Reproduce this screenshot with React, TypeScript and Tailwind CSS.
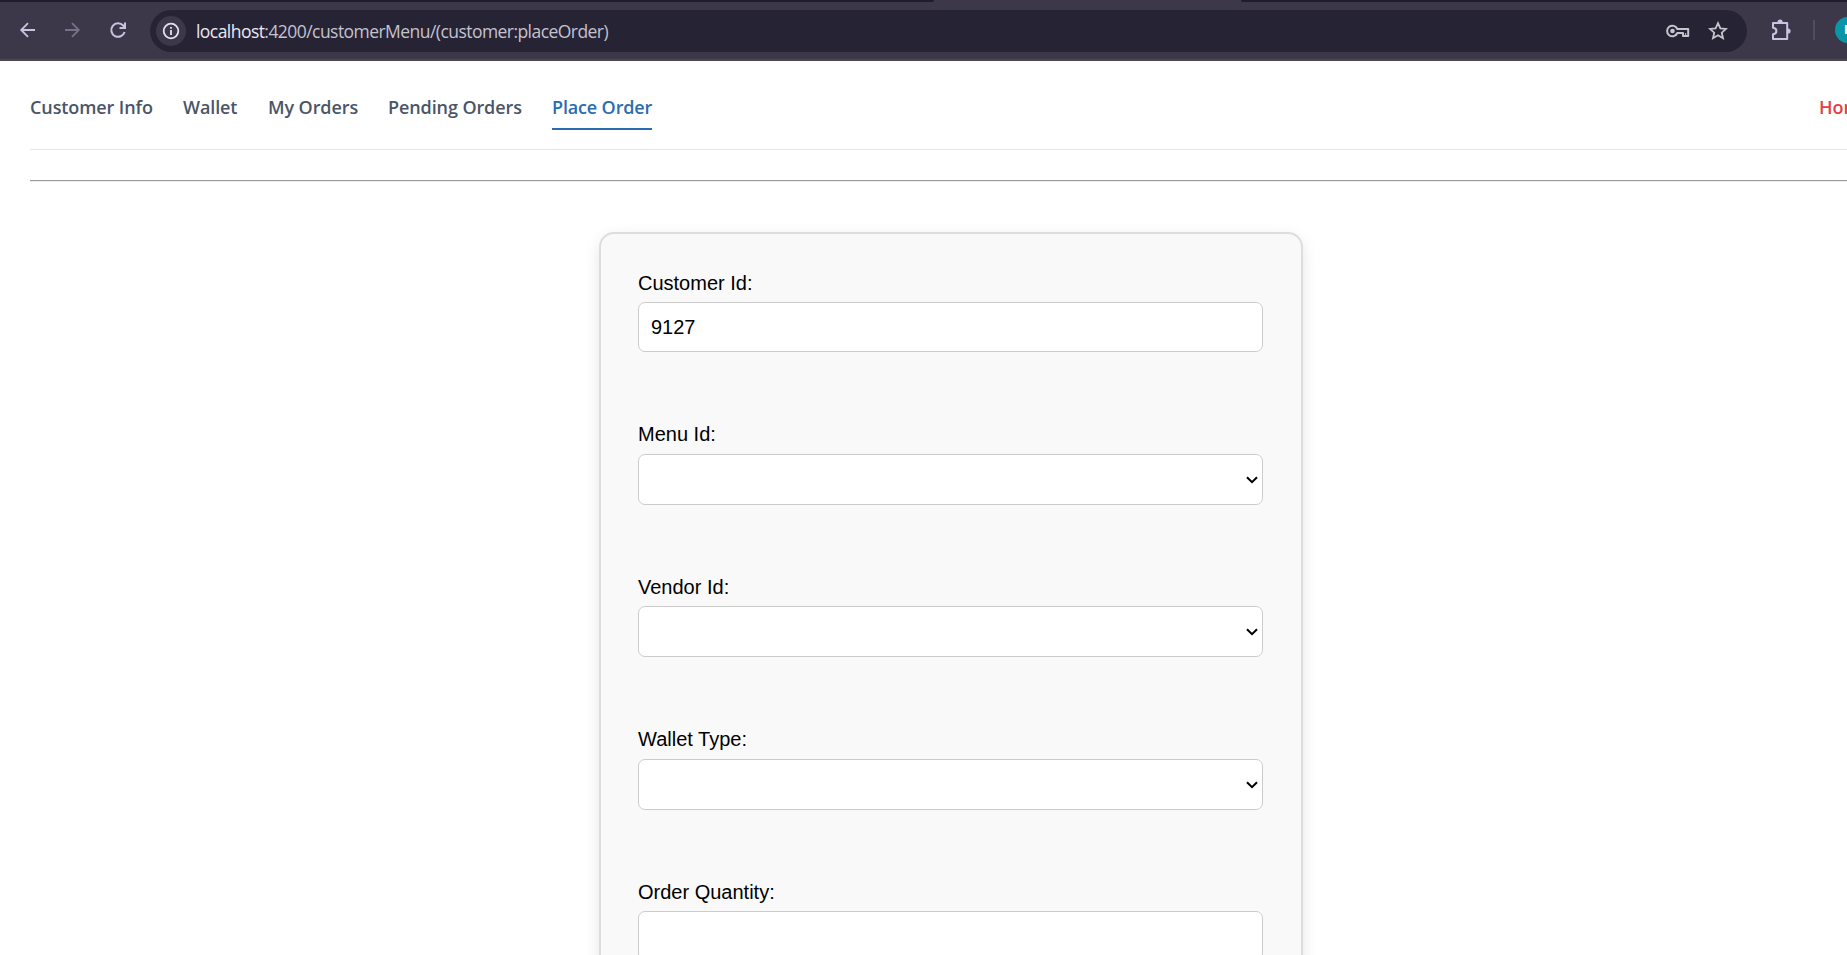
import type { ReactNode } from "react";

const NAV = [
  { label: "Customer Info", box: "w-[123px]" },
  { label: "Wallet", box: "w-[55px]" },
  { label: "My Orders", box: "w-[90px]" },
  { label: "Pending Orders", box: "w-[134px]" },
];

function Toolbar() {
  return (
    <header className="flex h-[61px] flex-col border-b-2 border-[#4a484b] bg-[#3c384a]">
      <div className="flex h-[2px] shrink-0 justify-between bg-[#3c384a]">
        <div className="w-[934px] rounded-br-[3px] bg-[#1f1c30]" />
        <div className="w-[606px] rounded-bl-[3px] bg-[#1f1c30]" />
      </div>
      <div className="flex h-[57px] shrink-0 items-center pb-px">
        <div className="flex w-[150px] shrink-0 items-center">
          <svg className="ml-[19px] h-[18px] w-[18px]" viewBox="0 0 18 18" fill="none" stroke="#c9c2e0" strokeWidth="1.8">
            <path d="M16 9H2.5M9 2.2L2.2 9L9 15.8" />
          </svg>
          <svg className="ml-[26px] h-[18px] w-[18px]" viewBox="0 0 18 18" fill="none" stroke="#767186" strokeWidth="1.8">
            <path d="M2 9h13.5M9 2.2L15.8 9L9 15.8" />
          </svg>
          <svg className="ml-[28px] h-[18px] w-[18px]" viewBox="0 0 18 18" fill="none" stroke="#c9c2e0" strokeWidth="2">
            <path d="M15.6 11A6.8 6.8 0 1 1 14.2 4.5L16 6.5M10.5 7H16V1.4" />
          </svg>
        </div>
        <div className="mt-[2px] flex h-[42px] w-[1597px] shrink-0 items-center rounded-full bg-[#262335]">
          <div className="ml-[6px] flex h-[30px] w-[30px] items-center justify-center rounded-full bg-[#3c384a]">
            <svg className="h-[18px] w-[18px]" viewBox="0 0 18 18" fill="none" stroke="#e4e0ee" strokeWidth="1.8">
              <circle cx="9" cy="9" r="7.3" />
              <path d="M9 8v5M9 5v1.8" />
            </svg>
          </div>
          <div className="ml-[10px] w-[420px] whitespace-nowrap font-['Open_Sans',sans-serif] text-[17.5px] leading-6 tracking-[-0.55px] text-[#c5c2ce]">
            <span className="text-[#ebe8f2]">localhost</span>:4200/customerMenu/(customer:placeOrder)
          </div>
          <svg className="ml-auto h-[14px] w-[24px]" viewBox="0 0 24 14" fill="none" stroke="#c7c5cb" strokeWidth="2">
            <path d="M11.3 5H22.2V12H17V9H11.3A5.3 5.3 0 1 1 11.3 5Z" strokeLinejoin="round" />
            <circle cx="6.5" cy="7" r="2.3" fill="#c7c5cb" stroke="none" />
            <path d="M19.6 9v3" strokeWidth="1" />
          </svg>
          <svg className="mr-[19px] ml-[18px] h-[20px] w-[20px]" viewBox="0 0 20 20" fill="none" stroke="#c7c5cb" strokeWidth="1.8">
            <path d="M10 2.2L12.4 7.3L18 7.9L13.8 11.7L15 17.2L10 14.3L5 17.2L6.2 11.7L2 7.9L7.6 7.3Z" />
          </svg>
        </div>
        <svg className="ml-[23px] h-[22px] w-[22px] shrink-0" viewBox="0 0 22 22" fill="none" stroke="#c9c2e0" strokeWidth="2">
          <path d="M3 4H17.2V20H3V15.2Q6.4 14.8 6.4 12Q6.4 9.2 3 8.8Z" strokeLinejoin="round" />
          <path d="M7.5 3.2A2.6 2.6 0 0 1 12.7 3.2ZM18 9.4A2.6 2.6 0 0 1 18 14.6Z" fill="#c9c2e0" stroke="none" />
        </svg>
        <div className="ml-[21px] h-[20px] w-[2px] shrink-0 bg-[#514d60]" />
        <div className="ml-[20px] flex h-[26px] w-[26px] shrink-0 items-center justify-center rounded-full bg-[#0797a7] font-['Open_Sans',sans-serif] text-[12px] font-bold text-white">
          R
        </div>
      </div>
    </header>
  );
}

function Nav() {
  return (
    <nav className="flex h-[89px] shrink-0 items-start border-b border-[#e2e8f0] pt-[34px] font-['Open_Sans',sans-serif] text-[18px] leading-[24px] font-semibold whitespace-nowrap text-[#4a5568]">
      {NAV.map((item) => (
        <a key={item.label} className={`mr-[30px] tracking-[-0.1px] ${item.box}`}>
          {item.label}
        </a>
      ))}
      <a className="h-[35px] w-[100px] border-b-2 border-[#2b6cb0] tracking-[-0.15px] text-[#2b6cb0]">Place Order</a>
      <a className="ml-auto w-[28px] text-[#e53e3e]">Home</a>
    </nav>
  );
}

function Field({ label, className, children }: { label: string; className: string; children: ReactNode }) {
  return (
    <label className={`flex flex-col ${className}`}>
      <span className="leading-[24px]">{label}</span>
      {children}
    </label>
  );
}

function Select() {
  return (
    <span className="flex h-[51px] items-center justify-end rounded-[7px] border border-[#ccc] bg-white pr-[4px]">
      <svg className="h-[8px] w-[12px]" viewBox="0 0 12 8" fill="none" stroke="#000" strokeWidth="2">
        <path d="M1 1.2L6 6.2L11 1.2" />
      </svg>
    </span>
  );
}

export default function App() {
  return (
    <div className="flex h-[955px] w-[1847px] flex-col overflow-hidden bg-white">
      <Toolbar />
      <main className="flex flex-col pl-[30px]">
        <Nav />
        <hr className="mt-[30px] h-[2px] border-t border-b border-t-[#9a9a9a] border-b-[#eeeeee]" />
        <form className="mt-[50px] ml-[569px] flex h-[900px] w-[704px] shrink-0 flex-col rounded-[15px] border-2 border-[#ddd] bg-[#f9f9f9] pt-[37px] pr-[38px] pl-[37px] font-['Liberation_Sans',Arial,sans-serif] text-[20px] text-black shadow-[0_5px_15px_rgba(0,0,0,0.1)]">
          <Field label="Customer Id:" className="mb-[70px] gap-[7px]">
            <input
              className="h-[50px] rounded-[7px] border border-[#ccc] bg-white px-[12px] outline-none"
              defaultValue="9127"
            />
          </Field>
          <Field label="Menu Id:" className="mb-[70px] gap-[8px]">
            <Select />
          </Field>
          <Field label="Vendor Id:" className="mb-[70px] gap-[7px]">
            <Select />
          </Field>
          <Field label="Wallet Type:" className="mb-[70px] gap-[8px]">
            <Select />
          </Field>
          <Field label="Order Quantity:" className="gap-[7px]">
            <input className="h-[50px] rounded-[7px] border border-[#ccc] bg-white px-[12px] outline-none" />
          </Field>
        </form>
      </main>
    </div>
  );
}
